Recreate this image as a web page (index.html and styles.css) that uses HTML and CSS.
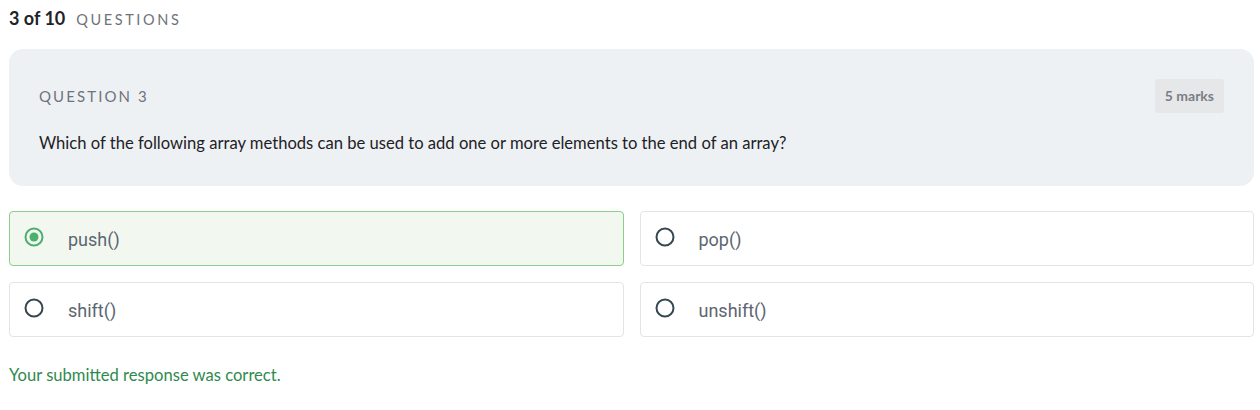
FILE: index.html
```html
<!DOCTYPE html>
<html>
<head>
<meta charset="utf-8">
<link rel="stylesheet" href="styles.css">
</head>
<body>
<div class="page">
  <div class="progress">
    <span class="count">3 of 10</span>
    <span class="label">QUESTIONS</span>
  </div>
  <div class="card">
    <div class="card-head">
      <span class="qnum">QUESTION 3</span>
      <span class="marks">5 marks</span>
    </div>
    <p class="qtext">Which of the following array methods can be used to add one or more elements to the end of an array?</p>
  </div>
  <div class="options">
    <div class="option selected">
      <svg class="radio" width="20" height="20" viewBox="0 0 20 20"><circle cx="10" cy="10" r="8.5" fill="none" stroke="#4caf6e" stroke-width="2"/><circle cx="10" cy="10" r="4.5" fill="#4caf6e"/></svg>
      <span class="otext">push()</span>
    </div>
    <div class="option">
      <svg class="radio" width="20" height="20" viewBox="0 0 20 20"><circle cx="10" cy="10" r="8.5" fill="none" stroke="#37474f" stroke-width="2"/></svg>
      <span class="otext">pop()</span>
    </div>
    <div class="option">
      <svg class="radio" width="20" height="20" viewBox="0 0 20 20"><circle cx="10" cy="10" r="8.5" fill="none" stroke="#37474f" stroke-width="2"/></svg>
      <span class="otext">shift()</span>
    </div>
    <div class="option">
      <svg class="radio" width="20" height="20" viewBox="0 0 20 20"><circle cx="10" cy="10" r="8.5" fill="none" stroke="#37474f" stroke-width="2"/></svg>
      <span class="otext">unshift()</span>
    </div>
  </div>
  <p class="feedback">Your submitted response was correct.</p>
</div>
</body>
</html>
```

FILE: styles.css
```css
* { box-sizing: border-box; }
body {
  margin: 0;
  background: #ffffff;
  font-family: "Lato", "Noto Sans", sans-serif;
  color: #1f2328;
}
.page {
  padding: 7px 6px 0 9px;
}
.progress {
  display: flex;
  align-items: baseline;
  gap: 11px;
  height: 42px;
}
.count {
  font-size: 18px;
  font-weight: 700;
  color: #1e2328;
}
.label {
  font-size: 14.5px;
  letter-spacing: 2.6px;
  color: #6e737a;
}
.card {
  background: #eef1f4;
  border-radius: 14px;
  padding: 30px 30px 30px 30px;
  height: 137px;
}
.card-head {
  display: flex;
  justify-content: space-between;
  align-items: center;
  height: 34px;
}
.qnum {
  font-size: 15px;
  letter-spacing: 2.1px;
  color: #6f747b;
}
.marks {
  background: #e5e7e9;
  border-radius: 3px;
  padding: 0 10px;
  height: 34px;
  line-height: 34px;
  font-size: 14px;
  font-weight: 700;
  color: #7a7e84;
}
.qtext {
  margin: 20px 0 0;
  font-size: 16.6px;
  color: #1d2125;
}
.options {
  display: grid;
  grid-template-columns: 1fr 1fr;
  gap: 16px;
  margin-top: 25px;
}
.option {
  display: flex;
  align-items: center;
  height: 55px;
  border: 1px solid #e3e4e6;
  border-radius: 4px;
  padding: 0 0 0 14px;
  gap: 24px;
  background: #fff;
}
.option.selected {
  background: #f2f8f0;
  border-color: #8ccf88;
}
.radio {
  flex: none;
  margin-top: -3px;
}
.otext {
  font-family: "Roboto", sans-serif;
  font-size: 18px;
  color: #5c6670;
  padding-top: 2px;
}
.feedback {
  margin: 28px 0 0;
  font-size: 16.6px;
  color: #2f8a4e;
}
```
